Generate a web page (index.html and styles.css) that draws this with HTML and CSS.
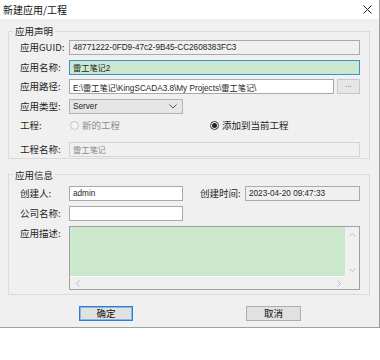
FILE: index.html
```html
<!DOCTYPE html>
<html lang="zh-CN">
  <head>
    <meta charset="UTF-8" />
    <meta name="viewport" content="width=device-width, initial-scale=1.0" />
    <title>新建应用/工程</title>
    <link rel="stylesheet" href="styles.css">
  </head>
  <body>
    <div class="dialog">
      <div class="titlebar">
        <span>新建应用/工程</span>
        <svg class="close" width="9" height="9" viewBox="0 0 9 9">
          <path d="M0.5 0.5 L8.5 8.5 M8.5 0.5 L0.5 8.5" stroke="#222" stroke-width="1" fill="none" />
        </svg>
      </div>

      <div class="content">
        <fieldset class="group">
          <legend>应用声明</legend>
          <div class="form form-decl">
            <label>应用GUID:</label>
            <input class="field field-ro" type="text" value="48771222-0FD9-47c2-9B45-CC2608383FC3" readonly />

            <label>应用名称:</label>
            <input class="field field-focus" type="text" value="雷工笔记2" readonly />

            <label>应用路径:</label>
            <div class="path">
              <input class="field" type="text" value="E:\雷工笔记\KingSCADA3.8\My Projects\雷工笔记\" readonly />
              <button class="browse">...</button>
            </div>

            <label>应用类型:</label>
            <div class="select">
              <span>Server</span>
              <svg width="8" height="5" viewBox="0 0 8 5">
                <path d="M0.5 0.5 L4 4 L7.5 0.5" stroke="#555" stroke-width="1" fill="none" />
              </svg>
            </div>

            <label class="label-top">工程:</label>
            <div class="radios">
              <span class="radio radio-disabled"><i></i>新的工程</span>
              <span class="radio radio-checked"><i></i>添加到当前工程</span>
            </div>

            <label>工程名称:</label>
            <input class="field field-disabled" type="text" value="雷工笔记" disabled />
          </div>
        </fieldset>

        <fieldset class="group group-info">
          <legend>应用信息</legend>
          <div class="form form-info">
            <label>创建人:</label>
            <input class="field" type="text" value="admin" readonly />
            <label class="label-mid">创建时间:</label>
            <input class="field field-ro" type="text" value="2023-04-20 09:47:33" readonly />

            <label>公司名称:</label>
            <input class="field span-1" type="text" value="" readonly />

            <label class="label-top label-first">应用描述:</label>
            <div class="memo">
              <div class="memo-text"></div>
              <div class="vscroll">
                <svg width="7" height="4" viewBox="0 0 7 4"><path d="M0.5 3.5 L3.5 0.5 L6.5 3.5" stroke="#bdbdbd" fill="none" /></svg>
                <svg width="7" height="4" viewBox="0 0 7 4"><path d="M0.5 0.5 L3.5 3.5 L6.5 0.5" stroke="#bdbdbd" fill="none" /></svg>
              </div>
              <div class="hscroll">
                <svg width="4" height="7" viewBox="0 0 4 7"><path d="M3.5 0.5 L0.5 3.5 L3.5 6.5" stroke="#bdbdbd" fill="none" /></svg>
                <svg width="4" height="7" viewBox="0 0 4 7"><path d="M0.5 0.5 L3.5 3.5 L0.5 6.5" stroke="#bdbdbd" fill="none" /></svg>
              </div>
              <div class="corner"></div>
            </div>
          </div>
        </fieldset>

        <div class="actions">
          <button class="btn btn-default">确定</button>
          <button class="btn">取消</button>
        </div>
      </div>
    </div>
  </body>
</html>
```

FILE: styles.css
```css
* {
  box-sizing: border-box;
}

body {
  margin: 0;
  background: #fff;
  font-family: "Noto Sans CJK SC", "Liberation Sans", sans-serif;
  font-size: 9.5px;
  color: #1e1e1e;
}

.dialog {
  width: 380px;
  background: #f0f0f0;
  border-right: 1px solid #a0a0a0;
  border-bottom: 1px solid #a0a0a0;
  box-shadow: 0 4px 10px rgba(0, 0, 0, 0.22);
}

.titlebar {
  height: 19px;
  background: #fff;
  display: flex;
  align-items: center;
  justify-content: space-between;
  padding: 0 7px 0 3px;
  font-size: 10px;
  color: #111;
}

.content {
  padding: 5px 9px 6px 8px;
}

.group {
  margin: 0;
  min-width: 0;
  border: 1px solid #dadada;
  padding: 2px 9px 1px 11px;
}

.group-info {
  margin-top: 9px;
  padding: 4px 9px 4px 11px;
}

legend {
  padding: 0 2px;
  margin-left: -7px;
  line-height: 14px;
}

.form {
  display: grid;
  grid-template-columns: 49px 1fr;
  align-items: center;
}

.form-decl {
  grid-template-rows: 15px 15px 15px 15px 19px 15px;
  row-gap: 4.5px;
}

.form-info {
  grid-template-columns: 49px 114px 62px 1fr;
  grid-template-rows: 15px 15px 64px;
  row-gap: 5px;
}

.form-info .memo {
  grid-column: 2 / 5;
  margin-top: 1px;
}

.form-info .span-1 {
  grid-column: 2 / 3;
}

.form-info .label-first {
  grid-column: 1;
}

label {
  white-space: nowrap;
  line-height: 15px;
}

.label-top {
  align-self: start;
}

.label-mid {
  padding-left: 17px;
}

.field {
  display: block;
  width: 100%;
  height: 15px;
  margin: 0;
  padding: 0 3px;
  border: 1px solid #a8a8a8;
  background: #fff;
  font-family: "Liberation Sans", "Noto Sans CJK SC", sans-serif;
  font-size: 8.2px;
  color: #1e1e1e;
  outline: none;
}

.field-ro {
  background: #f0f0f0;
  border-color: #aaa;
}

.field-focus {
  background: #cbe8cd;
  border-color: #3c8fd8;
}

.field-disabled {
  background: #f0f0f0;
  border-color: #d4d4d4;
  color: #8a8a8a;
}

.path {
  display: flex;
  gap: 3px;
  height: 15px;
}

.browse {
  flex: 0 0 23px;
  height: 15px;
  margin: 0;
  padding: 0 0 3px;
  border: 1px solid #c8c8c8;
  background: #e6e6e6;
  font-size: 8px;
  color: #555;
  line-height: 8px;
}

.select {
  width: 114px;
  height: 15px;
  display: flex;
  align-items: center;
  justify-content: space-between;
  padding: 0 5px 0 3px;
  border: 1px solid #b4b4b4;
  background: #e6e6e6;
  font-family: "Liberation Sans", sans-serif;
  font-size: 8.2px;
}

.radios {
  display: flex;
  align-self: start;
  height: 14px;
  align-items: center;
  gap: 90px;
  padding-left: 1px;
}

.radio {
  display: flex;
  align-items: center;
  gap: 3px;
}

.radio i {
  width: 9px;
  height: 9px;
  border-radius: 50%;
  border: 1px solid #333;
  background: #fff;
  display: flex;
  align-items: center;
  justify-content: center;
}

.radio-disabled {
  color: #8d8d8d;
}

.radio-disabled i {
  border-color: #c4c4c4;
  background: #f5f5f5;
}

.radio-checked i::after {
  content: "";
  width: 5px;
  height: 5px;
  border-radius: 50%;
  background: #222;
}

.memo {
  height: 64px;
  border: 1px solid #a0a0a0;
  display: grid;
  grid-template-columns: 1fr 14px;
  grid-template-rows: 1fr 12px;
  background: #f0f0f0;
}

.memo-text {
  background: #cbe8cd;
  border-bottom: 1px solid #fff;
}

.vscroll {
  display: flex;
  flex-direction: column;
  justify-content: space-between;
  align-items: center;
  padding: 6px 0 5px;
}

.hscroll {
  display: flex;
  justify-content: space-between;
  align-items: center;
  padding: 0 4px 0 6px;
}

.actions {
  display: flex;
  gap: 113px;
  margin-top: 11px;
  padding-left: 71px;
}

.btn {
  width: 55px;
  height: 15px;
  margin: 0;
  padding: 0;
  border: 1px solid #adadad;
  background: #e1e1e1;
  font-family: "Noto Sans CJK SC", sans-serif;
  font-size: 9.5px;
  line-height: 13px;
  color: #111;
}

.btn-default {
  width: 54px;
  border-color: #2b80d6;
  box-shadow: inset 0 0 0 1px rgba(43, 128, 214, 0.45);
}
```
